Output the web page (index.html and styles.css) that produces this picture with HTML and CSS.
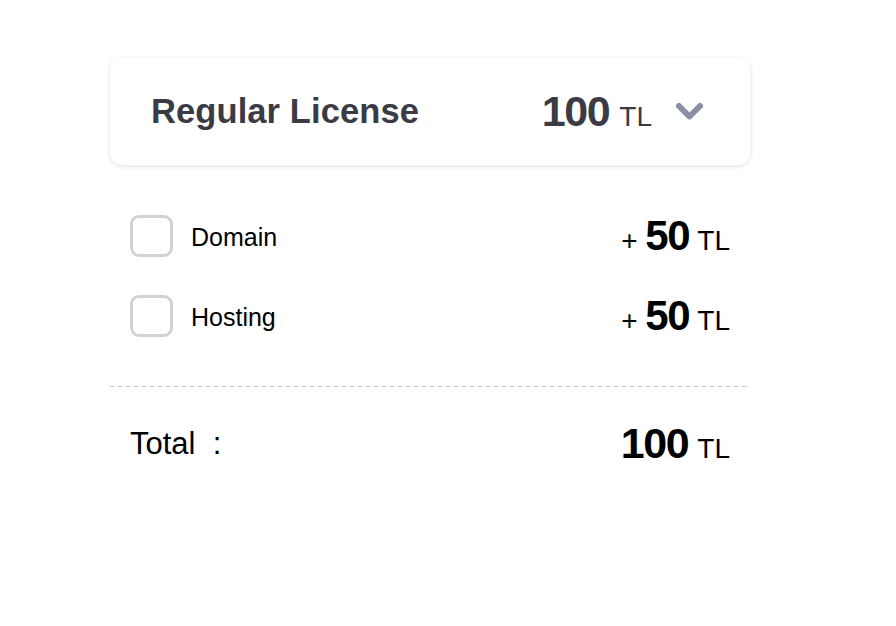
FILE: index.html
```html
<!DOCTYPE html>
<html>
<head>
<meta charset="utf-8">
<link rel="stylesheet" href="styles.css">
</head>
<body>
<div class="wrap">
  <div class="card">
    <span class="title">Regular License</span>
    <div class="card-right">
      <span class="price"><b>100</b> TL</span>
      <svg class="chev" width="32" height="22" viewBox="0 0 32 22"><polyline points="5,5 15.5,15.5 26,5" fill="none" stroke="#8b8fa5" stroke-width="6" stroke-linecap="round" stroke-linejoin="round"/></svg>
    </div>
  </div>
  <div class="options">
    <label class="opt">
      <span class="box"></span>
      <span class="name">Domain</span>
      <span class="add">+ <b>50</b> TL</span>
    </label>
    <label class="opt">
      <span class="box"></span>
      <span class="name">Hosting</span>
      <span class="add">+ <b>50</b> TL</span>
    </label>
  </div>
  <div class="divider"></div>
  <div class="total">
    <span class="tlabel">Total&nbsp; :</span>
    <span class="tval"><b>100</b> TL</span>
  </div>
</div>
</body>
</html>
```
FILE: styles.css
```css
html, body { margin: 0; padding: 0; background: #fff; }
body { font-family: "Liberation Sans", Arial, sans-serif; color: #000; }
.wrap { width: 640px; margin-left: 110px; padding-top: 58px; }
.card {
  height: 107px; box-sizing: border-box;
  border-radius: 12px;
  box-shadow: 0 1px 5px rgba(0,0,0,0.13);
  display: flex; align-items: center; justify-content: space-between;
  padding: 0 44px 0 41px;
}
.title { font-size: 34.5px; font-weight: bold; color: #3a3b45; letter-spacing: 0.1px; }
.card-right { display: flex; align-items: center; gap: 22px; }
.price { color: #3a3b45; font-size: 28px; }
.price b { font-size: 43px; letter-spacing: -1.5px; margin-right: 3px; }
.chev { display: block; margin-top: 0; }
.options { padding: 49px 20px 0 20px; display: flex; flex-direction: column; gap: 37px; }
.opt { display: flex; align-items: center; height: 43px; }
.box {
  width: 43px; height: 42px; box-sizing: border-box;
  border: 3px solid #d3d3d3; border-radius: 9px;
}
.name { font-size: 25px; margin-left: 18px; flex: 1; margin-top: 3px; }
.add { font-size: 28px; }
.add b { font-size: 42px; letter-spacing: -1.5px; margin-right: 1px; }
.divider {
  margin-top: 49px; height: 1px;
  background: repeating-linear-gradient(to right, #cfcfcf 0 5px, transparent 5px 8px);
}
.total {
  display: flex; align-items: center; justify-content: space-between;
  padding: 32px 20px 0 20px;
}
.tlabel { font-size: 31px; }
.tval { font-size: 28px; }
.tval b { font-size: 43px; letter-spacing: -1.5px; margin-right: 2px; }
```
